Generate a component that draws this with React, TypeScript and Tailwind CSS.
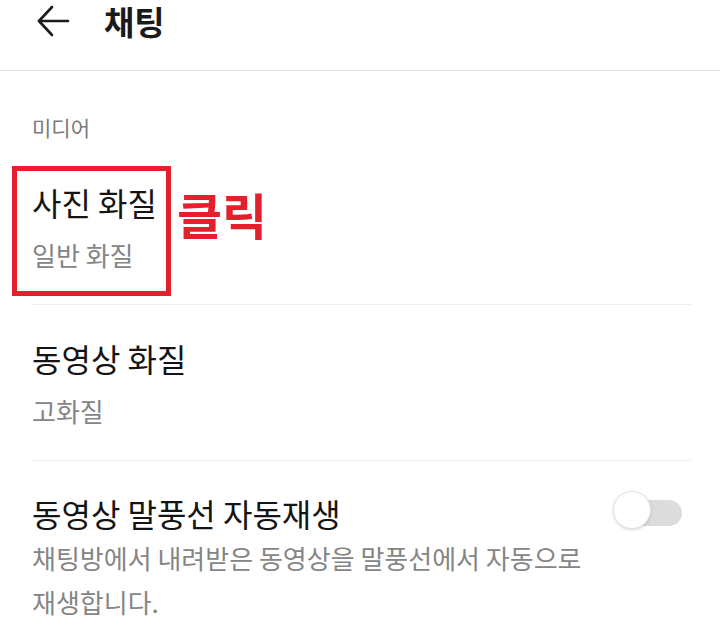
const font = {
  fontFamily: '"Noto Sans CJK KR", "Noto Sans", sans-serif',
};

function Toggle() {
  return (
    <div className="relative w-[69px] h-[40px] flex items-center shrink-0">
      <div className="ml-[7px] w-[62px] h-[26px] rounded-full bg-[#dcdcdc]" />
      <div className="absolute left-0 top-[-2px] w-[38px] h-[38px] rounded-full bg-white border border-[#e2e2e2] shadow-[0_1px_3px_rgba(0,0,0,0.15)]" />
    </div>
  );
}

export default function App() {
  return (
    <div className="w-[720px] h-[627px] bg-white overflow-hidden relative" style={font}>
      {/* Header */}
      <div className="h-[71px] border-b border-[#e3e3e3]">
        <div className="flex items-center h-[42px] pl-[36px]">
          <svg width="34" height="34" viewBox="0 0 34 34" fill="none" stroke="#1c1c1c" strokeWidth="2.6" strokeLinecap="round" strokeLinejoin="round">
            <path d="M32 17H3" />
            <path d="M16 3L3 17l13 14" />
          </svg>
          <h1 className="ml-[34px] text-[33px] leading-[42px] font-bold text-[#1a1a1a] whitespace-nowrap">채팅</h1>
        </div>
      </div>

      {/* Section */}
      <div className="mt-[42px] px-8 text-[21px] leading-[28px] text-[#7a7a7a]">미디어</div>

      <div className="mt-2 ml-8 mr-[28px]">
        <div className="pt-[33px] pb-8 border-b border-[#efefef]">
          <div className="text-[32px] leading-[40px] text-[#141414]">사진 화질</div>
          <div className="mt-4 text-[26px] leading-[34px] text-[#858585]">일반 화질</div>
        </div>
        <div className="pt-[33px] pb-8 border-b border-[#efefef]">
          <div className="text-[32px] leading-[40px] text-[#141414]">동영상 화질</div>
          <div className="mt-4 text-[26px] leading-[34px] text-[#858585]">고화질</div>
        </div>
        <div className="pt-[32px]">
          <div className="flex items-center justify-between pr-[10px]">
            <div className="text-[32px] leading-[40px] text-[#141414]">동영상 말풍선 자동재생</div>
            <Toggle />
          </div>
          <div className="mt-[3px] text-[26px] leading-[44px] text-[#858585]">
            채팅방에서 내려받은 동영상을 말풍선에서 자동으로
            <br />
            재생합니다.
          </div>
        </div>
      </div>

      {/* Annotation overlay */}
      <div className="absolute left-[12px] top-[166px] w-[159px] h-[130px] border-[5px] border-[#e3202b]" />
      <div className="absolute left-[177px] top-[183px] text-[49px] leading-[62px] font-bold text-[#e3202b]">클릭</div>
    </div>
  );
}
